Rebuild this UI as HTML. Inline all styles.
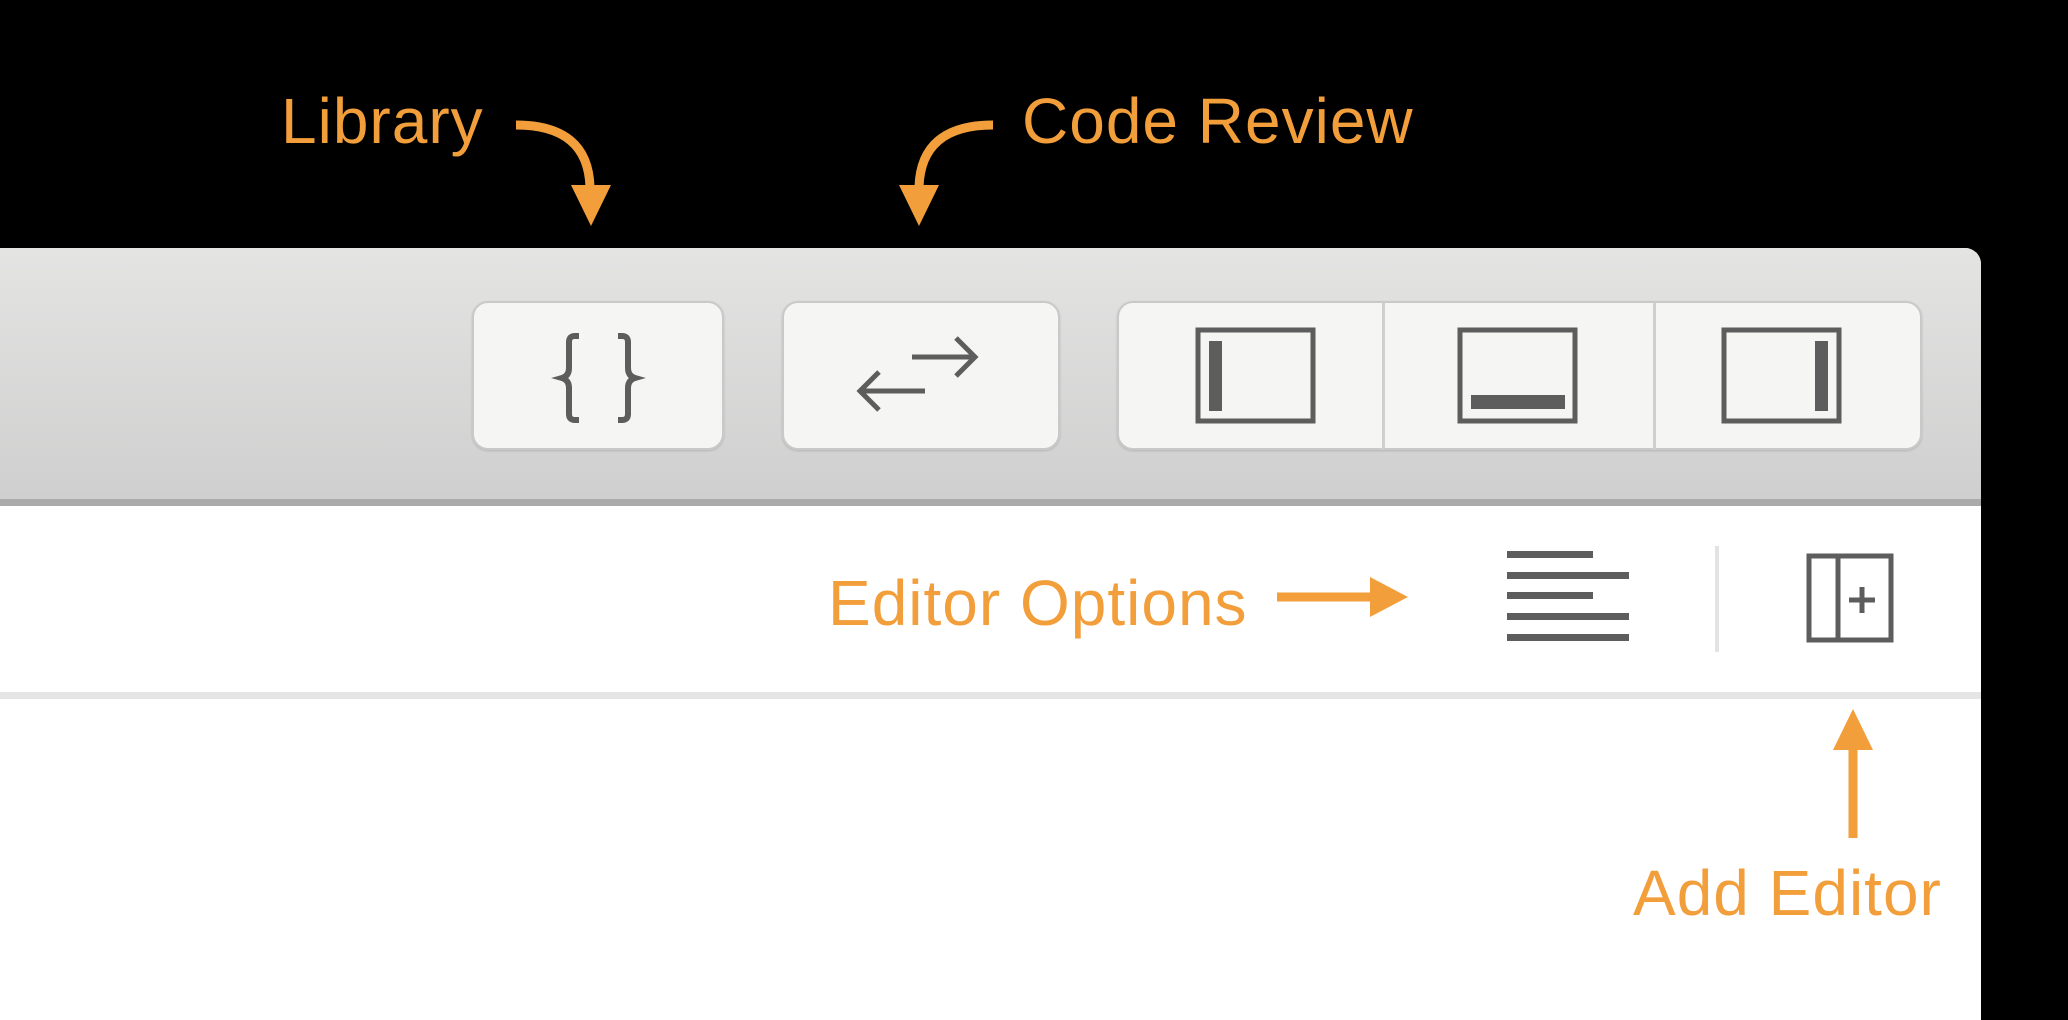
<!DOCTYPE html>
<html><head><style>
html,body{margin:0;padding:0;background:#000;width:2068px;height:1020px;overflow:hidden;font-family:"Liberation Sans",sans-serif;}
.abs{position:absolute}
.lbl{position:absolute;color:#f29e3b;font-size:64px;letter-spacing:1px;line-height:1;white-space:nowrap;}
.btn{position:absolute;background:#f5f5f3;border:2px solid #c9c9c9;border-radius:16px;box-shadow:0 1px 2px rgba(0,0,0,.15);box-sizing:border-box}
</style></head><body>
<div class="abs" style="left:0;top:248px;width:1981px;height:772px;background:#fff;border-top-right-radius:16px;overflow:hidden">
  <div class="abs" style="left:0;top:0;width:1981px;height:251px;background:linear-gradient(#e4e4e3,#cfcfcf)"></div>
  <div class="abs" style="left:0;top:251px;width:1981px;height:7px;background:#aaa"></div>
  <div class="abs" style="left:0;top:444px;width:1981px;height:7px;background:#e5e5e5"></div>
</div>
<div class="btn" style="left:472px;top:301px;width:252px;height:149px"></div>
<div class="btn" style="left:782px;top:301px;width:278px;height:149px"></div>
<div class="btn" style="left:1117px;top:301px;width:805px;height:149px"></div>
<div class="abs" style="left:1382px;top:302px;width:3px;height:147px;background:#cfcfcf"></div>
<div class="abs" style="left:1653px;top:302px;width:3px;height:147px;background:#cfcfcf"></div>
<svg class="abs" style="left:0;top:0" width="2068" height="1020">
 <g fill="none" stroke="#5d5d5d" stroke-width="6">
  <path d="M579 336h-4q-6 0-6 6v26q0 8-7 10q7 2 7 10v26q0 6 6 6h4"/>
  <path d="M618 336h4q6 0 6 6v26q0 8 7 10q-7 2-7 10v26q0 6-6 6h-4"/>
  <path d="M912 357h63M956 338l19 19l-19 19M925 391h-63M879 372l-19 19l19 19" stroke-width="5"/>
  <rect x="1198" y="330" width="115" height="91" stroke-width="5"/>
  <rect x="1460" y="330" width="115" height="91" stroke-width="5"/>
  <rect x="1724" y="330" width="115" height="91" stroke-width="5"/>
  <rect x="1809" y="556" width="82" height="84" stroke-width="5"/>
  <path d="M1838 556v84M1862 587v26M1849 600h26" stroke-width="5"/>
  <path d="M1717 546v106" stroke="#e3e3e3" stroke-width="4"/>
 </g>
 <g fill="#5d5d5d">
  <rect x="1209" y="341" width="13" height="70"/>
  <rect x="1471" y="395" width="94" height="14"/>
  <rect x="1815" y="341" width="13" height="70"/>
  <rect x="1507" y="551" width="86" height="7"/>
  <rect x="1507" y="572" width="122" height="7"/>
  <rect x="1507" y="592" width="86" height="7"/>
  <rect x="1507" y="613" width="122" height="7"/>
  <rect x="1507" y="634" width="122" height="7"/>
 </g>
 <g fill="none" stroke="#f29e3b" stroke-width="9">
  <path d="M516 125q72 0 74 62"/>
  <path d="M993 125q-72 0 -74 62"/>
  <path d="M1277 597h100"/>
  <path d="M1853 740v98"/>
 </g>
 <g fill="#f29e3b">
  <path d="M571 185h40l-20 41z"/>
  <path d="M899 185h40l-20 41z"/>
  <path d="M1370 577v40l38-20z"/>
  <path d="M1833 750h40l-20-41z"/>
 </g>
</svg>
<div class="lbl" style="left:281px;top:89px">Library</div>
<div class="lbl" style="left:1022px;top:89px">Code Review</div>
<div class="lbl" style="left:828px;top:571px">Editor Options</div>
<div class="lbl" style="left:1633px;top:861px">Add Editor</div>
</body></html>
